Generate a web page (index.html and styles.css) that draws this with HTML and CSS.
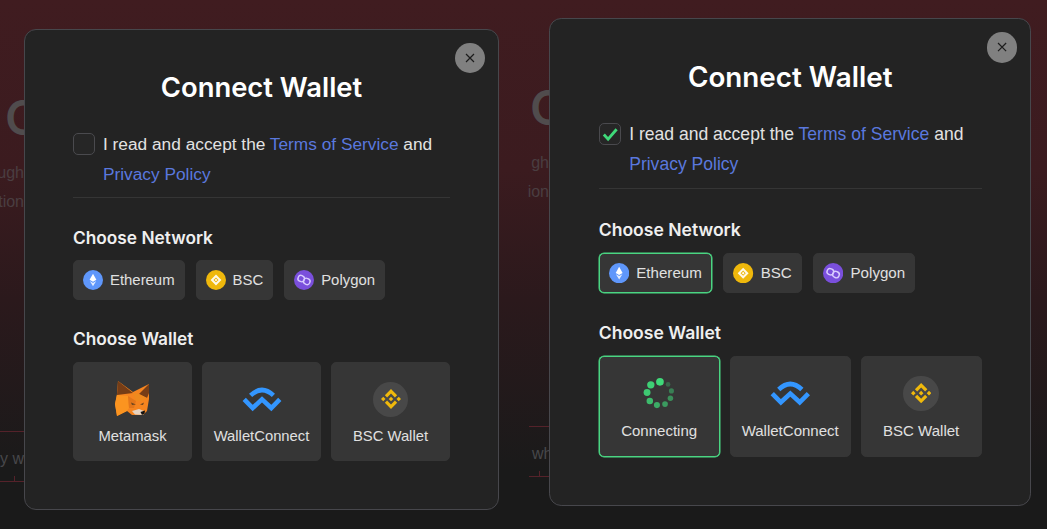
FILE: index.html
```html
<!DOCTYPE html>
<html lang="en">

<head>
    <meta charset="UTF-8">
    <meta name="viewport" content="width=device-width, initial-scale=1.0">
    <title>Connect Wallet</title>
    <link rel="stylesheet" href="styles.css">
</head>

<body>

    <svg class="defs" aria-hidden="true">
        <symbol id="ico-eth" viewBox="0 0 20 20">
            <circle cx="10" cy="10" r="10" fill="#5f97fb" />
            <path d="M10 3.8 6.6 9.8 10 11.8l3.4-2z" fill="#fff" />
            <path d="M6.8 11 10 16.2l3.2-5.2L10 12.9z" fill="#e3edff" />
        </symbol>
        <symbol id="ico-bsc" viewBox="0 0 20 20">
            <circle cx="10" cy="10" r="10" fill="#efb80c" />
            <path d="M10 4.6 15.4 10 10 15.4 4.6 10zM10 7.4 7.4 10l2.6 2.6 2.6-2.6z" fill="#fff" fill-rule="evenodd" opacity=".9" />
            <path d="M10 8.7 11.3 10 10 11.3 8.7 10z" fill="#fff" />
        </symbol>
        <symbol id="ico-polygon" viewBox="0 0 20 20">
            <circle cx="10" cy="10" r="10" fill="#7a4fdc" />
            <g fill="none" stroke="#d9ccff" stroke-width="1.4">
                <rect x="4" y="5.6" width="6.4" height="6" rx="2.8" transform="rotate(25 7.2 8.6)" />
                <rect x="9.6" y="8.4" width="6.4" height="6" rx="2.8" transform="rotate(25 12.8 11.4)" />
            </g>
        </symbol>
        <symbol id="ico-fox" viewBox="0 0 35 36">
            <path d="M3 0 18 11 34 3 34 18 32 30 28 34 17 34 12 30 2 35 0 23 2 13z" fill="#f5841f" />
            <path d="M3 0 18 12 2 14z" fill="#763d16" />
            <path d="M34 3 24 13 32 17 34 12z" fill="#763d16" />
            <path d="M18 12 24 13 32 17 27 20 21 20z" fill="#ee8a1e" />
            <path d="M0 23 2 14 13 15 14 27 12 30 2 35z" fill="#fb9420" />
            <path d="M13 15 21 20 19 27 14 27z" fill="#e2761b" />
            <path d="M16 21.5 21 23.5 17 24z" fill="#6b4520" />
            <path d="M25 23.5 29 21.5 28 24z" fill="#6b4520" />
            <path d="M17 30 24 28 29 30 28 34 20 33.5z" fill="#e6d3c1" />
            <path d="M25.5 31 30 29.5 29.5 32.5 27 34z" fill="#111" />
        </symbol>
        <symbol id="ico-wc" viewBox="0 0 40 25">
            <g fill="none" stroke="#3396ff" stroke-width="4.6">
                <path d="M8.6 8.4Q20-2.4 31.4 8.4" />
                <path d="M2.2 12.4 10.7 21 20 12.4 29.3 21 37.8 12.4" />
            </g>
        </symbol>
        <symbol id="ico-bnb" viewBox="6 6 20 20">
            <path fill="#f0b90b" d="M12.116 14.404L16 10.52l3.886 3.886 2.26-2.26L16 6l-6.144 6.144 2.26 2.26zM6 16l2.26-2.26L10.52 16l-2.26 2.26L6 16zm6.116 1.596L16 21.48l3.886-3.886 2.26 2.259L16 26l-6.144-6.144-.003-.003 2.263-2.257zM21.48 16l2.26-2.26L26 16l-2.26 2.26L21.48 16zm-3.188-.002h.002V16L16 18.294l-2.291-2.29-.004-.004.004-.003.401-.402.195-.195L16 13.706l2.293 2.293z" />
        </symbol>
    </svg>

    <div class="page">

        <div class="shot shot-left">
            <div class="ghost">
                <div class="ghost-head">C</div>
                <div class="ghost-line">ugh</div>
                <div class="ghost-line">tion</div>
                <div class="ghost-row">y wh</div>
            </div>

            <div class="modal">
                <button class="close" aria-label="Close">
                    <svg viewBox="0 0 10 10"><path d="M1 1l8 8M9 1l-8 8" /></svg>
                </button>
                <h1>Connect Wallet</h1>
                <div class="consent">
                    <span class="check"></span>
                    <p>I read and accept the <a href="#">Terms of Service</a> and <a href="#">Privacy Policy</a></p>
                </div>
                <h2>Choose Network</h2>
                <div class="chips">
                    <div class="chip"><svg><use href="#ico-eth" /></svg>Ethereum</div>
                    <div class="chip"><svg><use href="#ico-bsc" /></svg>BSC</div>
                    <div class="chip"><svg><use href="#ico-polygon" /></svg>Polygon</div>
                </div>
                <h2 class="wallet-title">Choose Wallet</h2>
                <div class="wallets">
                    <div class="wallet">
                        <div class="wallet-icon"><svg class="fox"><use href="#ico-fox" /></svg></div>
                        Metamask
                    </div>
                    <div class="wallet">
                        <div class="wallet-icon"><svg class="wc"><use href="#ico-wc" /></svg></div>
                        WalletConnect
                    </div>
                    <div class="wallet">
                        <div class="wallet-icon"><span class="bnb"><svg><use href="#ico-bnb" /></svg></span></div>
                        BSC Wallet
                    </div>
                </div>
            </div>
        </div>

        <div class="shot shot-right">
            <div class="ghost">
                <div class="ghost-head">C</div>
                <div class="ghost-line">gh</div>
                <div class="ghost-line">ion</div>
                <div class="ghost-row">wh</div>
            </div>

            <div class="modal">
                <button class="close" aria-label="Close">
                    <svg viewBox="0 0 10 10"><path d="M1 1l8 8M9 1l-8 8" /></svg>
                </button>
                <h1>Connect Wallet</h1>
                <div class="consent">
                    <span class="check">
                        <svg viewBox="0 0 16 16"><path d="M1.8 8.4 6 13 14.4 3.2" /></svg>
                    </span>
                    <p>I read and accept the <a href="#">Terms of Service</a> and <a href="#">Privacy Policy</a></p>
                </div>
                <h2>Choose Network</h2>
                <div class="chips">
                    <div class="chip active"><svg><use href="#ico-eth" /></svg>Ethereum</div>
                    <div class="chip"><svg><use href="#ico-bsc" /></svg>BSC</div>
                    <div class="chip"><svg><use href="#ico-polygon" /></svg>Polygon</div>
                </div>
                <h2 class="wallet-title">Choose Wallet</h2>
                <div class="wallets">
                    <div class="wallet active">
                        <div class="wallet-icon">
                            <svg class="spinner" viewBox="-16 -16 32 32">
                                <circle cx="0.7" cy="-11.3" r="3.8" opacity="1" />
                                <circle cx="-8.3" cy="-8.3" r="3.6" opacity=".95" />
                                <circle cx="-12" cy="-0.7" r="3.4" opacity=".9" />
                                <circle cx="-9.3" cy="7.7" r="3.2" opacity=".82" />
                                <circle cx="-2.3" cy="11.7" r="3" opacity=".72" />
                                <circle cx="5.7" cy="10.7" r="2.8" opacity=".62" />
                                <circle cx="11" cy="5" r="2.7" opacity=".55" />
                                <circle cx="12" cy="-2.3" r="2.5" opacity=".45" />
                                <circle cx="8.7" cy="-8.7" r="2.3" opacity=".3" />
                            </svg>
                        </div>
                        Connecting
                    </div>
                    <div class="wallet">
                        <div class="wallet-icon"><svg class="wc"><use href="#ico-wc" /></svg></div>
                        WalletConnect
                    </div>
                    <div class="wallet">
                        <div class="wallet-icon"><span class="bnb"><svg><use href="#ico-bnb" /></svg></span></div>
                        BSC Wallet
                    </div>
                </div>
            </div>
        </div>

    </div>

</body>

</html>
```

FILE: styles.css
```css
* {
    box-sizing: border-box;
}

body {
    margin: 0;
    overflow: hidden;
    font-family: 'Liberation Sans', Arial, sans-serif;
    background: linear-gradient(#401c20 0, #3b1b1f 170px, #2b191c 300px, #1a1a1a 470px);
}

.defs {
    display: none;
}

.page {
    display: flex;
    height: 100vh;
}

.shot {
    position: relative;
    overflow: hidden;
}

.shot-left {
    width: 525px;
    padding: 29px 0 0 24px;
}

.shot-right {
    flex: 1;
    padding: 18px 0 0 24px;
}

/* page behind the modal, only a sliver of it shows */
.ghost {
    position: absolute;
    color: #4a3e41;
    font-size: 16px;
    line-height: 29px;
}

.shot-left .ghost {
    left: 0;
    top: 89px;
    width: 24px;
}

.shot-right .ghost {
    left: 4px;
    top: 79px;
    width: 20px;
}

.ghost-head {
    padding-left: 5px;
    margin-bottom: 11px;
    font-family: Inter, sans-serif;
    font-size: 48px;
    font-weight: 600;
    line-height: 58px;
    color: #504c4d;
}

.shot-right .ghost-head {
    padding-left: 1px;
}

.ghost-line {
    display: flex;
    justify-content: flex-end;
    white-space: nowrap;
}

.ghost-row {
    position: relative;
    margin-top: 215px;
    padding-top: 12px;
    height: 51px;
    border-top: 1px solid #55222a;
    border-bottom: 1px solid #55222a;
    white-space: nowrap;
    color: #47474a;
}

.ghost-row::after {
    content: "";
    position: absolute;
    left: 14px;
    bottom: 0;
    width: 1px;
    height: 5px;
    background-color: #55222a;
}

.shot-right .ghost-row {
    margin-top: 220px;
    padding-left: 3px;
}

.shot-right .ghost-row::after {
    left: 10px;
}

.modal {
    position: relative;
    width: 475px;
    padding: 40px 48px 48px;
    background-color: #232323;
    border: 1px solid #47474c;
    border-radius: 12px;
}

.shot-right .modal {
    zoom: 1.0155;
}

.close {
    position: absolute;
    top: 13px;
    right: 13px;
    display: flex;
    align-items: center;
    justify-content: center;
    width: 30px;
    height: 30px;
    padding: 0;
    border: none;
    border-radius: 50%;
    background-color: #808080;
}

.close svg {
    width: 10px;
    height: 10px;
}

.close path {
    fill: none;
    stroke: #1c1c1c;
    stroke-width: 1.2;
}

h1 {
    margin: 0 0 25px;
    font-family: Inter, sans-serif;
    font-size: 27.4px;
    font-weight: 600;
    line-height: 34px;
    text-align: center;
    color: #fff;
}

.shot-right h1 {
    margin-bottom: 24px;
}

.consent {
    display: flex;
    gap: 8px;
    padding-bottom: 8px;
    border-bottom: 1px solid #353535;
}

.consent p {
    margin: 0;
    font-size: 17.3px;
    line-height: 30px;
    color: #e2e2e2;
}

.consent a {
    color: #5a78de;
    text-decoration: none;
}

.check {
    flex: none;
    display: flex;
    align-items: center;
    justify-content: center;
    width: 22px;
    height: 22px;
    margin-top: 4px;
    background-color: #262626;
    border: 1px solid #4a4a4e;
    border-radius: 5px;
}

.check svg {
    width: 16px;
    height: 16px;
}

.check path {
    fill: none;
    stroke: #3fd979;
    stroke-width: 2.8;
}

h2 {
    margin: 29px 0 11px;
    font-family: Inter, sans-serif;
    font-size: 17.3px;
    font-weight: 600;
    line-height: 22px;
    color: #efefef;
}

.shot-right .consent + h2 {
    margin-top: 30px;
}

.wallet-title {
    margin: 28px 0 12px;
}

.chips {
    display: flex;
    gap: 11px;
}

.chip {
    display: flex;
    align-items: center;
    gap: 7px;
    height: 40px;
    padding: 0 9px;
    background-color: #363636;
    border: 1px solid #363636;
    border-radius: 5px;
    font-size: 14.9px;
    color: #e0e0e0;
}

.chip svg {
    width: 20px;
    height: 20px;
}

.wallets {
    display: grid;
    grid-template-columns: repeat(3, 1fr);
    gap: 10px;
}

.wallet {
    display: flex;
    flex-direction: column;
    align-items: center;
    height: 99px;
    padding-top: 18px;
    background-color: #363636;
    border: 1px solid #363636;
    border-radius: 5px;
    font-size: 14.8px;
    line-height: 20px;
    color: #e0e0e0;
}

.active {
    border-color: #4ad582;
    box-shadow: 0 0 0 0.5px #4ad582;
}

.wallet-icon {
    display: flex;
    align-items: center;
    justify-content: center;
    height: 36px;
    margin-bottom: 9px;
}

.fox {
    width: 35px;
    height: 36px;
}

.wc {
    width: 40px;
    height: 25px;
}

.bnb {
    display: flex;
    align-items: center;
    justify-content: center;
    width: 35px;
    height: 35px;
    border-radius: 50%;
    background-color: #484848;
}

.bnb svg {
    width: 20px;
    height: 20px;
}

.spinner {
    width: 32px;
    height: 32px;
    fill: #3fd979;
}
```
